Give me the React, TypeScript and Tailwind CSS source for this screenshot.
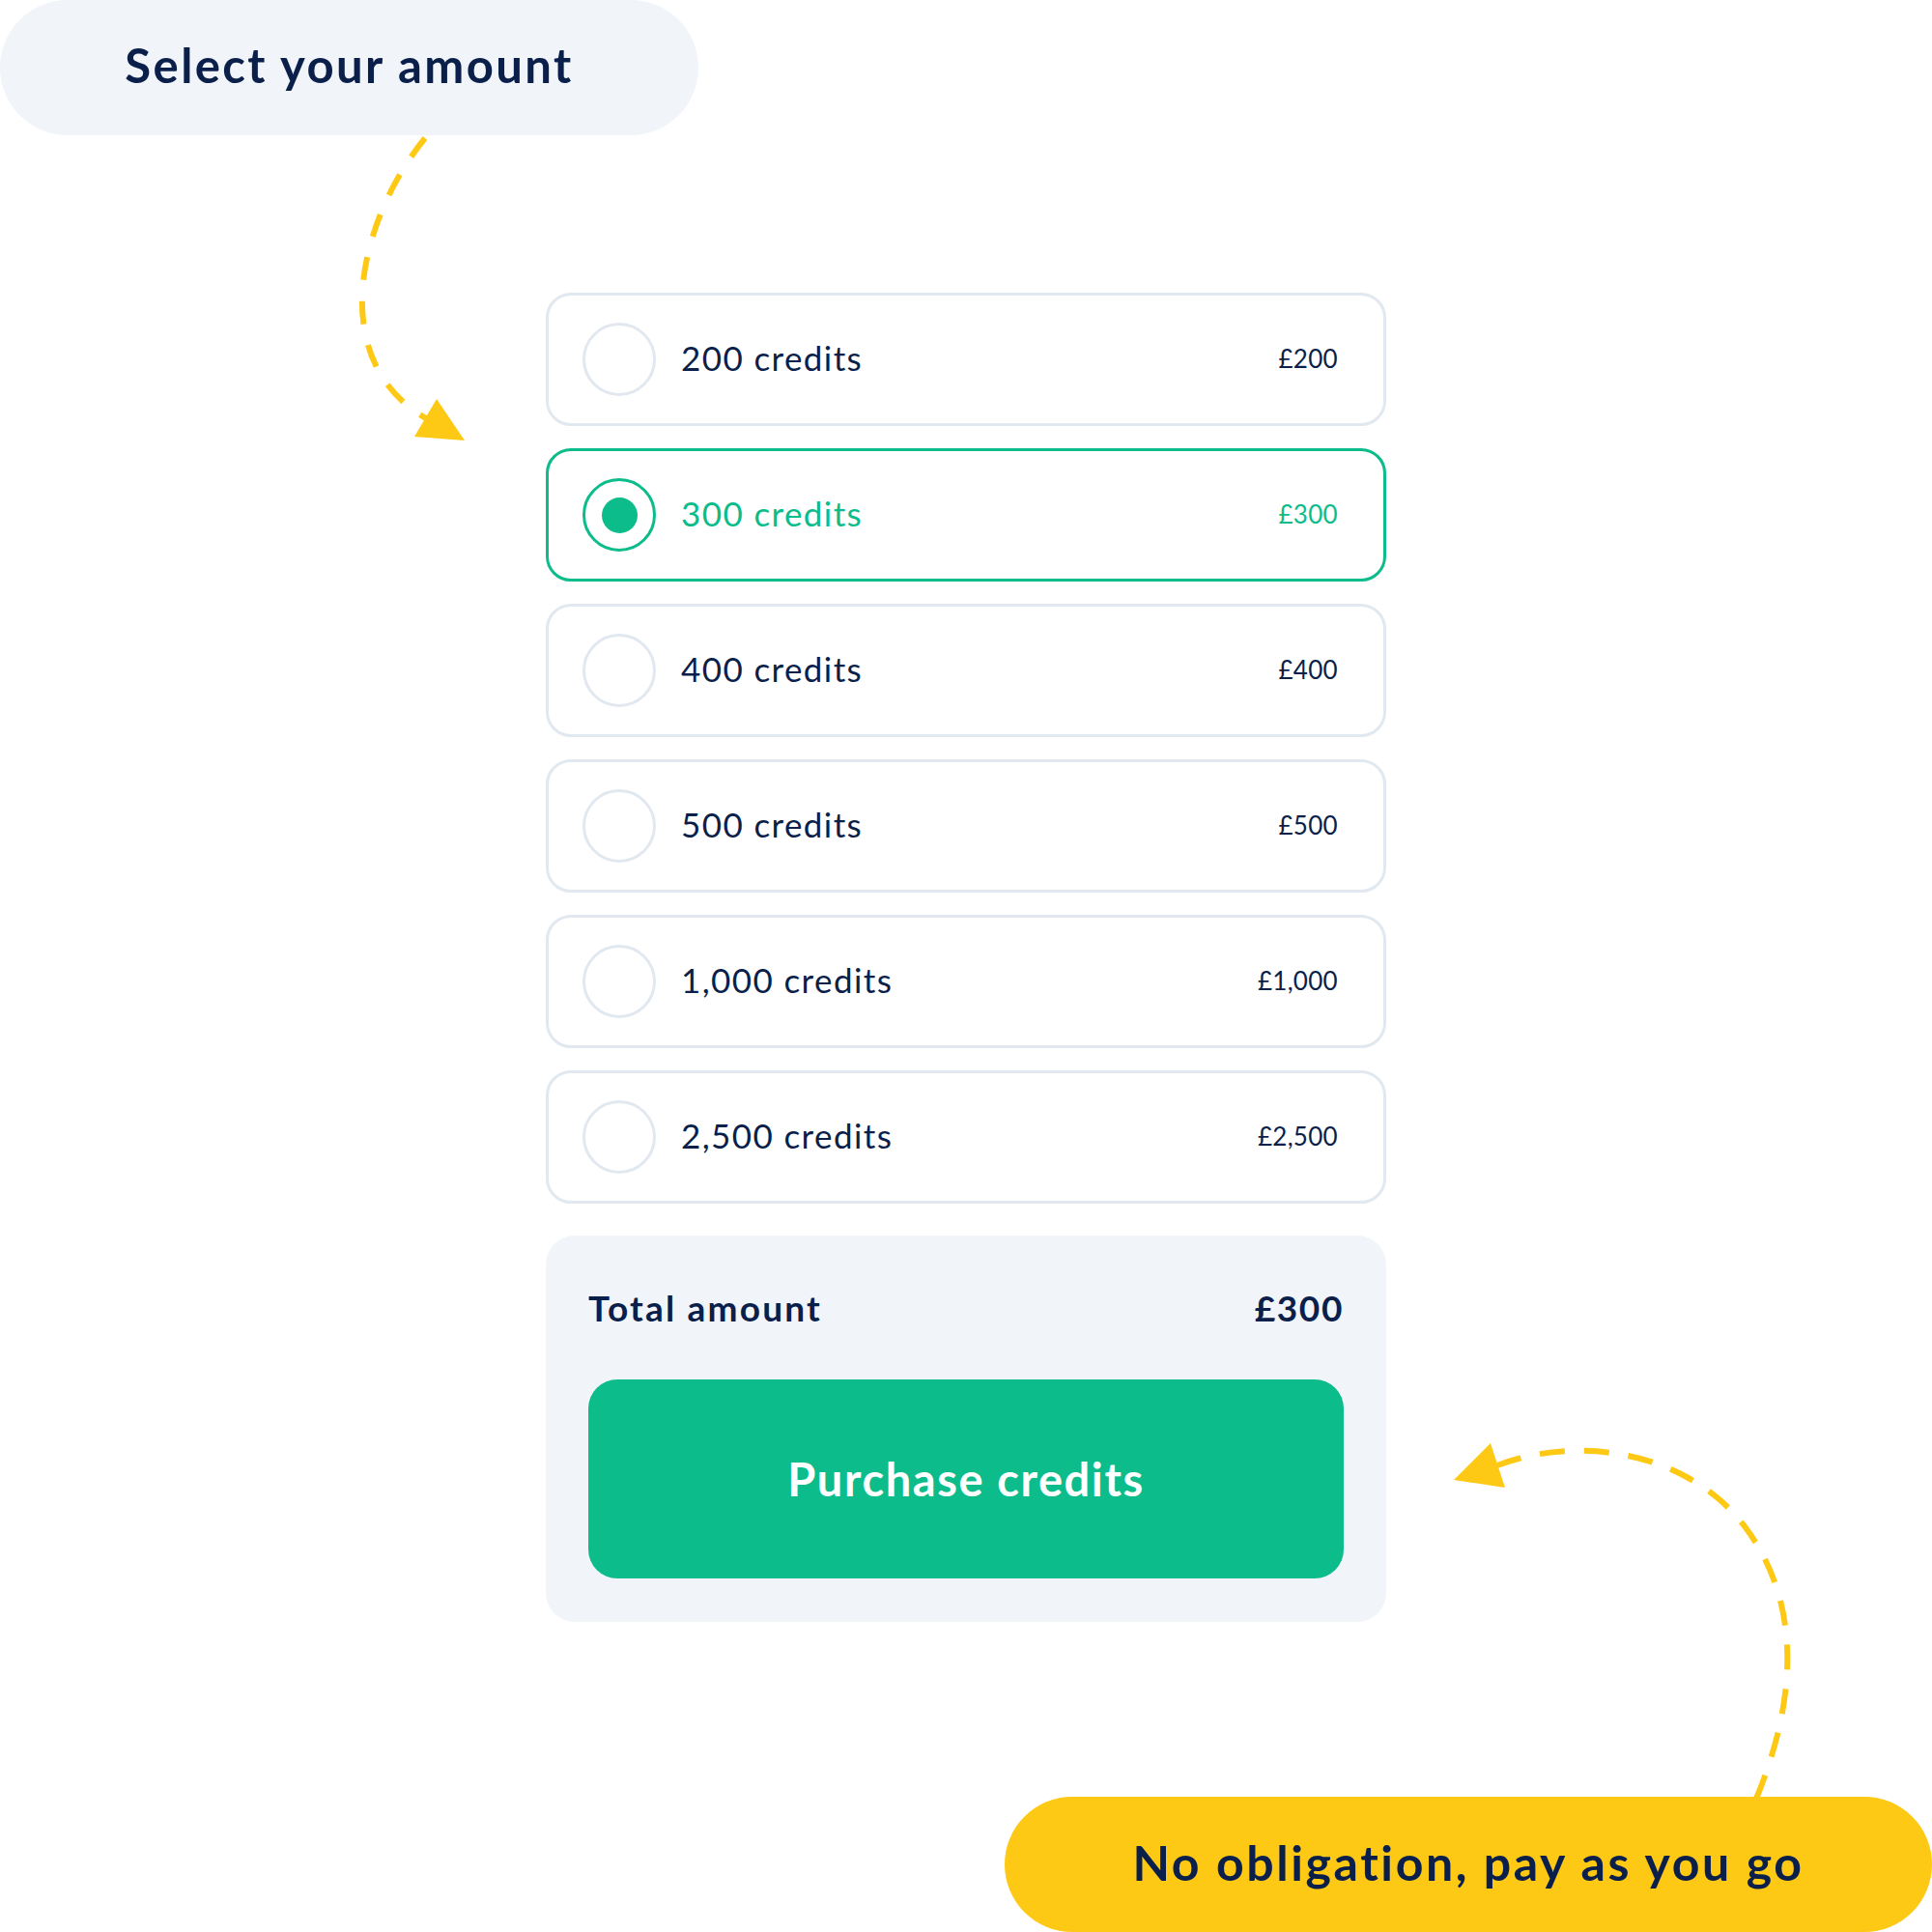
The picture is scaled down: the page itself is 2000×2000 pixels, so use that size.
import React from "react";

const options = [
  { credits: "200 credits", price: "£200" },
  { credits: "300 credits", price: "£300" },
  { credits: "400 credits", price: "£400" },
  { credits: "500 credits", price: "£500" },
  { credits: "1,000 credits", price: "£1,000" },
  { credits: "2,500 credits", price: "£2,500" },
];

export default function App() {
  const selected = 1;
  return (
    <div
      className="relative w-[2000px] h-[2000px] bg-white overflow-hidden flex flex-col text-[#0b1f4b]"
      style={{ fontFamily: "Lato, 'Open Sans', sans-serif" }}
    >
      <div className="w-[723px] h-[140px] rounded-full bg-[#f1f5f9] flex items-center justify-center shrink-0">
        <span className="text-[49px] font-bold leading-none tracking-[2.4px] -mt-[6px]">Select your amount</span>
      </div>

      <div className="ml-[565px] mt-[163px] w-[870px] flex flex-col">
        <div className="flex flex-col gap-[23px]">
          {options.map((o, i) => {
            const sel = i === selected;
            return (
              <div
                key={o.credits}
                className={
                  sel
                    ? "h-[138px] rounded-[26px] border-[3px] border-[#0cbc8b] flex items-center pl-[35px] pr-[47px] text-[#0cbc8b]"
                    : "h-[138px] rounded-[26px] border-[3px] border-[#e2e8f0] flex items-center pl-[35px] pr-[47px]"
                }
              >
                {sel ? (
                  <div className="w-[76px] h-[76px] rounded-full border-[3px] border-[#0cbc8b] flex items-center justify-center shrink-0">
                    <div className="w-[37px] h-[37px] rounded-full bg-[#0cbc8b]" />
                  </div>
                ) : (
                  <div className="w-[76px] h-[76px] rounded-full border-[3px] border-[#e2e8f0] shrink-0" />
                )}
                <span className="ml-[26px] text-[35px] leading-none tracking-[1.4px] -mt-[3px]">{o.credits}</span>
                <span className="ml-auto text-[26px] leading-none tracking-[0.3px] -mt-[3px]">{o.price}</span>
              </div>
            );
          })}
        </div>

        <div className="mt-[33px] h-[400px] rounded-[30px] bg-[#f1f5f9] px-[44px] pt-[56px] flex flex-col">
          <div className="flex items-center justify-between">
            <span className="text-[37px] font-bold leading-none tracking-[2.2px]">Total amount</span>
            <span className="text-[37px] font-bold leading-none tracking-[1.6px]">£300</span>
          </div>
          <button className="mt-[56px] h-[206px] w-full rounded-[30px] bg-[#0cbc8b] text-white text-[47px] font-bold tracking-[1.6px] flex items-center justify-center">
            Purchase credits
          </button>
        </div>
      </div>

      <div className="ml-[1040px] mt-[181px] w-[960px] h-[140px] shrink-0 rounded-full bg-[#fec915] flex items-center justify-center">
        <span className="text-[50px] font-bold leading-none tracking-[2.6px] -mt-[5px]">No obligation, pay as you go</span>
      </div>

      <svg className="absolute inset-0 pointer-events-none" width="2000" height="2000" viewBox="0 0 2000 2000">
        <path
          d="M 440 143 C 373 225, 333 375, 446 436"
          fill="none"
          stroke="#fec915"
          strokeWidth="6"
          strokeDasharray="24 22"
        />
        <polygon points="452,413 481,456 429,452" fill="#fec915" />
        <path
          d="M 1818 1862 C 1860 1760, 1866 1660, 1806 1580 C 1745 1500, 1630 1486, 1550 1517"
          fill="none"
          stroke="#fec915"
          strokeWidth="6"
          strokeDasharray="26 20"
        />
        <polygon points="1543,1494 1505,1532 1558,1540" fill="#fec915" />
      </svg>
    </div>
  );
}
